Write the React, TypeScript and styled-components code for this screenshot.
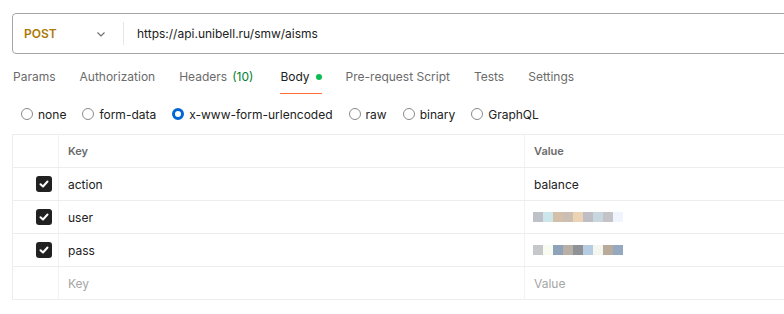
import styled, { createGlobalStyle } from "styled-components";

const GlobalStyle = createGlobalStyle`
  html, body {
    margin: 0;
    padding: 0;
    background: #fff;
    font-family: Inter, "Noto Sans", sans-serif;
    color: #212121;
    overflow: hidden;
  }
`;

const Page = styled.div`
  width: 784px;
  height: 314px;
  padding: 13px 0 0 12px;
  box-sizing: border-box;
  overflow: hidden;
`;

const UrlBar = styled.div`
  display: flex;
  align-items: center;
  height: 41px;
  width: 800px;
  box-sizing: border-box;
  border: 1px solid #a6a6a6;
  border-radius: 4px;
`;

const Method = styled.div`
  display: flex;
  align-items: center;
  justify-content: space-between;
  width: 111px;
  height: 23px;
  padding: 0 16px 0 11px;
  box-sizing: border-box;
  border-right: 1px solid #e6e6e6;
  font-size: 12px;
  font-weight: 600;
  color: #ad7a03;
`;

const Url = styled.div`
  padding-left: 13px;
  font-size: 12px;
  color: #212121;
`;

const Tabs = styled.div`
  display: flex;
  gap: 24px;
  height: 40px;
  padding-left: 1px;
`;

const Tab = styled.div<{ $active?: boolean }>`
  display: flex;
  align-items: center;
  gap: 4px;
  height: 40px;
  padding-top: 6px;
  box-sizing: border-box;
  font-size: 12px;
  color: ${({ $active }) => ($active ? "#212121" : "#6b6b6b")};
  border-bottom: 1px solid ${({ $active }) => ($active ? "#ff6c37" : "transparent")};
`;

const Count = styled.span`
  color: #007f31;
  margin: 0 3px 0 1px;
`;

const Dot = styled.span`
  width: 6px;
  height: 6px;
  border-radius: 50%;
  background: #0cbb52;
  margin-left: 2px;
`;

const Radios = styled.div`
  display: flex;
  align-items: center;
  gap: 16px;
  height: 40px;
  padding-left: 9px;
`;

const RadioItem = styled.label`
  display: flex;
  align-items: center;
  gap: 5px;
  font-size: 12px;
  color: #212121;
`;

const Circle = styled.span<{ $on?: boolean }>`
  width: 12px;
  height: 12px;
  box-sizing: border-box;
  border-radius: 50%;
  border: ${({ $on }) => ($on ? "3.5px solid #0265d2" : "1px solid #8a8a8a")};
  background: #fff;
`;

const Table = styled.div`
  width: 800px;
  border-top: 1px solid #ededed;
  border-left: 1px solid #ededed;
  box-sizing: border-box;
`;

const Row = styled.div`
  display: grid;
  grid-template-columns: 45px 466px 1fr;
  height: 33px;
  border-bottom: 1px solid #ededed;
  box-sizing: border-box;
`;

const Cell = styled.div<{ $head?: boolean; $muted?: boolean }>`
  display: flex;
  align-items: center;
  padding-left: 9px;
  border-left: 1px solid #f2f2f2;
  font-size: ${({ $head }) => ($head ? "11px" : "12px")};
  font-weight: ${({ $head }) => ($head ? 600 : 400)};
  color: ${({ $head, $muted }) => ($head ? "#6b6b6b" : $muted ? "#a6a6a6" : "#212121")};
`;

const CheckCell = styled.div`
  display: flex;
  align-items: center;
  justify-content: flex-end;
  padding-right: 6px;
`;

const Check = styled.span`
  display: flex;
  align-items: center;
  justify-content: center;
  width: 16px;
  height: 16px;
  border-radius: 3px;
  background: #212121;
`;

const Blur = styled.div`
  display: flex;
  height: 10px;
  margin-left: -1px;
`;

const Pixel = styled.span<{ $c: string }>`
  width: 10px;
  height: 10px;
  background: ${({ $c }) => $c};
`;

const tabs = ["Params", "Authorization", "Headers", "Body", "Pre-request Script", "Tests", "Settings"];
const modes = ["none", "form-data", "x-www-form-urlencoded", "raw", "binary", "GraphQL"];

const userPx = ["#bfc1c8", "#cce6ec", "#d4bfab", "#cbbfb3", "#ecd3b6", "#bebec4", "#c8d6e0", "#c4c4c8", "#f0f4fc"];
const passPx = ["#c6c7ca", "#f8fcf0", "#8ea3b9", "#b8b0a6", "#8e9297", "#b6cce0", "#f4f6f0", "#b8ab9c", "#94a8c0"];

const rows = [
  { key: "action", value: "balance" },
  { key: "user", pixels: userPx },
  { key: "pass", pixels: passPx },
];

function Chevron() {
  return (
    <svg width="12" height="12" viewBox="0 0 12 12" fill="none">
      <path d="M2.5 4.5 6 8l3.5-3.5" stroke="#6b6b6b" strokeWidth="1.1" />
    </svg>
  );
}

function Tick() {
  return (
    <svg width="12" height="12" viewBox="0 0 12 12" fill="none">
      <path d="M2.5 6.2 5 8.5l4.5-5" stroke="#fff" strokeWidth="2" strokeLinecap="round" strokeLinejoin="round" />
    </svg>
  );
}

export default function App() {
  return (
    <Page>
      <GlobalStyle />
      <UrlBar>
        <Method>
          POST
          <Chevron />
        </Method>
        <Url>https://api.unibell.ru/smw/aisms</Url>
      </UrlBar>

      <Tabs>
        {tabs.map((t) => (
          <Tab key={t} $active={t === "Body"}>
            {t}
            {t === "Headers" && <Count>(10)</Count>}
            {t === "Body" && <Dot />}
          </Tab>
        ))}
      </Tabs>

      <Radios>
        {modes.map((m) => (
          <RadioItem key={m}>
            <Circle $on={m === "x-www-form-urlencoded"} />
            {m}
          </RadioItem>
        ))}
      </Radios>

      <Table>
        <Row>
          <CheckCell />
          <Cell $head>Key</Cell>
          <Cell $head>Value</Cell>
        </Row>
        {rows.map((r) => (
          <Row key={r.key}>
            <CheckCell>
              <Check>
                <Tick />
              </Check>
            </CheckCell>
            <Cell>{r.key}</Cell>
            <Cell>
              {r.pixels ? (
                <Blur>
                  {r.pixels.map((c, i) => (
                    <Pixel key={i} $c={c} />
                  ))}
                </Blur>
              ) : (
                r.value
              )}
            </Cell>
          </Row>
        ))}
        <Row>
          <CheckCell />
          <Cell $muted>Key</Cell>
          <Cell $muted>Value</Cell>
        </Row>
      </Table>
    </Page>
  );
}
